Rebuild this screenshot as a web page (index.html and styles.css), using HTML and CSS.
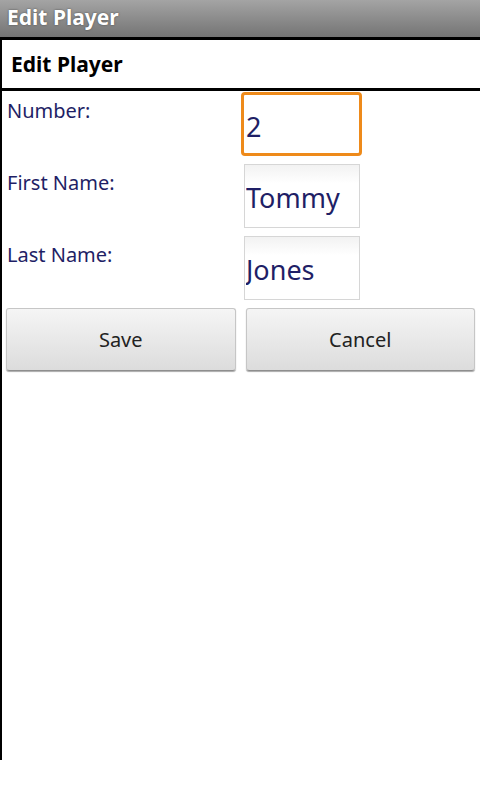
FILE: index.html
```html
<!DOCTYPE html>
<html lang="en">
<head>
    <meta charset="UTF-8">
    <meta name="viewport" content="width=device-width, initial-scale=1.0">
    <title>Edit Player</title>
    <link rel="stylesheet" href="styles.css">
</head>
<body>
    <div class="titlebar">Edit Player</div>
    <div class="screen">
        <h1 class="header">Edit Player</h1>
        <form id="player-form">
            <div class="row">
                <label for="number">Number:</label>
                <input type="text" id="number" class="focused" value="2">
            </div>
            <div class="row">
                <label for="first-name">First Name:</label>
                <input type="text" id="first-name" value="Tommy">
            </div>
            <div class="row">
                <label for="last-name">Last Name:</label>
                <input type="text" id="last-name" value="Jones">
            </div>
            <div class="buttons">
                <button type="button">Save</button>
                <button type="button">Cancel</button>
            </div>
        </form>
    </div>
</body>
</html>
```

FILE: styles.css
```css
body {
    margin: 0;
    font-family: "Noto Sans", "Open Sans", sans-serif;
    background-color: #fff;
}
.titlebar {
    height: 37px;
    line-height: 34px;
    padding-left: 7px;
    font-size: 21px;
    font-weight: bold;
    color: #fff;
    text-shadow: 0 0 2px #444;
    background: linear-gradient(#a4a4a4, #747474);
}
.screen {
    height: 720px;
    border-top: 3px solid #000;
    border-left: 2px solid #000;
}
.header {
    margin: 0;
    height: 48px;
    line-height: 48px;
    padding-left: 9px;
    font-size: 21px;
    font-weight: bold;
    color: #000;
    border-bottom: 3px solid #000;
}
.row {
    display: flex;
    height: 72px;
}
label {
    width: 239px;
    padding: 8px 0 0 5px;
    box-sizing: border-box;
    font-size: 20px;
    line-height: 24px;
    color: #1f1f66;
}
input {
    box-sizing: border-box;
    width: 116px;
    height: 64px;
    margin: 1px 0 0 3px;
    padding: 16px 1px 14px;
    font-family: "Noto Sans", "Open Sans", sans-serif;
    font-size: 27px;
    line-height: 32px;
    color: #1f1f66;
    border: 1px solid #d6d6d6;
    border-radius: 0;
    background: linear-gradient(#f2f2f2, #fff 30%);
    outline: none;
}
input.focused {
    width: 121px;
    margin-left: 0;
    padding: 15px 2px 10px;
    border: 3px solid #ee8a1a;
    border-radius: 4px;
    background: #fff;
}
.buttons {
    display: flex;
    gap: 10px;
    padding: 1px 5px 0 4px;
}
button {
    flex: 1;
    height: 63px;
    font-family: "Noto Sans", "Open Sans", sans-serif;
    font-size: 20px;
    color: #222;
    background: linear-gradient(#f5f5f5, #dcdcdc);
    border: 1px solid #c6c6c6;
    border-bottom-color: #8e8e8e;
    border-radius: 3px;
    box-shadow: 0 1px 1px #aaa;
}
```
